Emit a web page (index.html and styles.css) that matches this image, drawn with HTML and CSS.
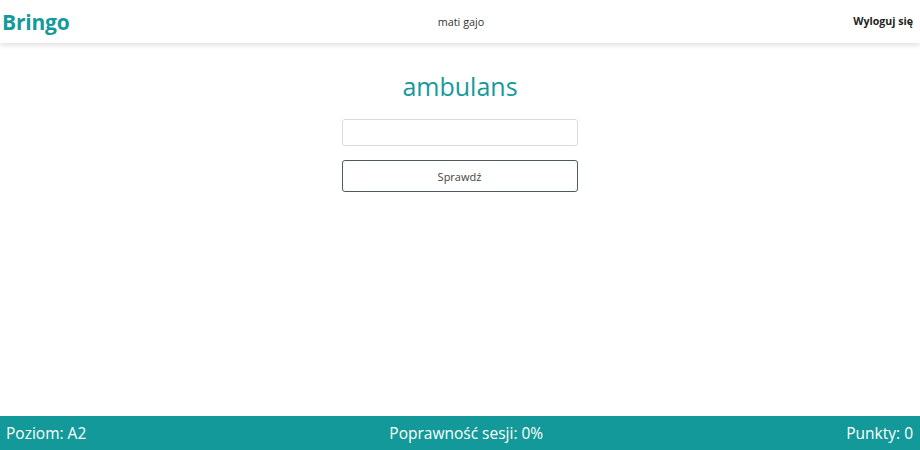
FILE: index.html
```html
<!DOCTYPE html>
<html lang="pl">
<head>
<meta charset="utf-8">
<title>Bringo</title>
<link rel="stylesheet" href="styles.css">
</head>
<body>
<div class="page">
  <header class="topbar">
    <div class="brand">Bringo</div>
    <div class="user">mati gajo</div>
    <div class="logout">Wyloguj się</div>
  </header>
  <main class="content">
    <h1 class="word">ambulans</h1>
    <input class="answer" type="text">
    <button class="check">Sprawdź</button>
  </main>
  <footer class="statusbar">
    <div class="stat">Poziom: A2</div>
    <div class="stat">Poprawność sesji: 0%</div>
    <div class="stat">Punkty: 0</div>
  </footer>
</div>
</body>
</html>
```
FILE: styles.css
```css
* { box-sizing: border-box; }
html, body { margin: 0; padding: 0; height: 100%; }
body {
  font-family: "Open Sans", "Noto Sans", sans-serif;
  background: #fff;
  color: #333;
}
.page {
  height: 450px;
  display: flex;
  flex-direction: column;
}
.topbar {
  height: 43px;
  flex: 0 0 43px;
  display: grid;
  grid-template-columns: 1fr auto 1fr;
  align-items: center;
  padding: 0 7px 0 2px;
  box-shadow: 0 2px 5px rgba(0,0,0,0.13);
  position: relative;
  z-index: 1;
}
.brand {
  font-size: 21px;
  font-weight: 700;
  color: #149a9b;
  letter-spacing: -0.2px;
}
.user {
  font-size: 10.8px;
  color: #333;
  margin-left: 7px;
  margin-top: -1px;
}
.logout {
  justify-self: end;
  font-size: 10.6px;
  font-weight: 700;
  color: #222;
  margin-top: -1px;
}
.content {
  flex: 1;
  display: flex;
  flex-direction: column;
  align-items: center;
  padding-top: 25px;
}
.word {
  margin: 0;
  font-size: 25px;
  font-weight: 400;
  color: #149a9b;
  line-height: 36px;
  height: 51px;
}
.answer {
  width: 236px;
  height: 27px;
  border: 1px solid #dcdcdc;
  border-radius: 3px;
  background: #fff;
  margin: 0 0 14px -1px;
  font: inherit;
}
.check {
  width: 236px;
  height: 32px;
  margin-left: -1px;
  border: 1px solid #4d5a5a;
  border-radius: 3px;
  background: #fff;
  color: #444;
  font-family: inherit;
  font-size: 11px;
}
.statusbar {
  height: 34px;
  flex: 0 0 34px;
  background: #139999;
  color: #fff;
  display: flex;
  justify-content: space-between;
  align-items: center;
  padding: 0 7px 0 6px;
  font-size: 15.5px;
}
```
